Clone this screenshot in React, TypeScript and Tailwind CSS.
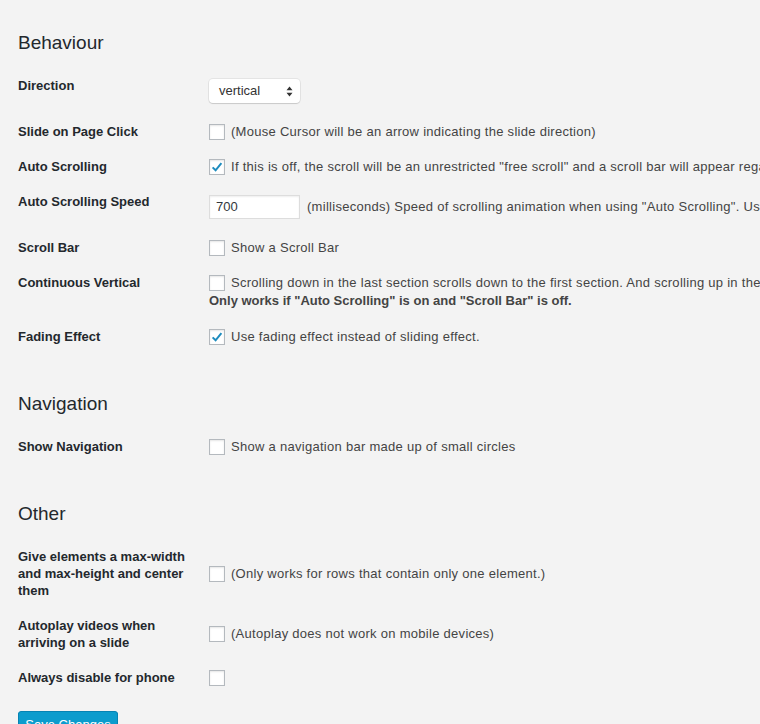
import React from 'react';

const font = { fontFamily: '"Liberation Sans", Arial, sans-serif' };

const Checkbox: React.FC<{ checked?: boolean }> = ({ checked }) => (
  <span className="inline-flex h-4 w-4 shrink-0 items-center justify-center border border-[#b4b9be] bg-white shadow-[inset_0_1px_2px_rgba(0,0,0,0.1)]">
    {checked && (
      <svg width="14" height="14" viewBox="0 0 14 14">
        <path d="M2.6 7.4 L5.6 10.3 L11.4 3.2" fill="none" stroke="#1e8cbe" strokeWidth="2" />
      </svg>
    )}
  </span>
);

const Row: React.FC<{ label: React.ReactNode; children: React.ReactNode; center?: boolean }> = ({
  label,
  children,
  center,
}) => (
  <div className={`flex py-[9px] ${center ? 'items-center' : 'items-start'}`}>
    <div className="w-[191px] shrink-0 pr-[10px] text-[13px] leading-[17px] font-bold text-[#23282d]">
      {label}
    </div>
    <div className="flex-1 whitespace-nowrap text-[13px] leading-[18px] tracking-[0.28px] text-[#444]">
      {children}
    </div>
  </div>
);

const CheckLine: React.FC<{ checked?: boolean; text?: string }> = ({ checked, text }) => (
  <div className="flex h-[17px] items-center gap-[6px]">
    <Checkbox checked={checked} />
    {text && <span>{text}</span>}
  </div>
);

const Heading: React.FC<{ children: React.ReactNode }> = ({ children }) => (
  <h2 className="mb-3 text-[19px] leading-[27px] font-normal text-[#23282d]">{children}</h2>
);

export default function App() {
  return (
    <div style={font} className="h-[724px] w-[760px] overflow-hidden bg-[#f3f3f3] pl-[18px] pt-[29px]">
      <Heading>Behaviour</Heading>
      <Row label="Direction">
        <div className="my-[2px] flex h-6 w-[91px] items-center justify-between rounded-[4px] bg-white pl-[10px] pr-[7px] tracking-normal text-[#333] shadow-[0_0_0_1px_rgba(0,0,0,0.06),0_1px_1px_rgba(0,0,0,0.12)]">
          <span>vertical</span>
          <svg width="7" height="11" viewBox="0 0 7 11">
            <path d="M3.5 0.5 L6.5 4.3 L0.5 4.3 Z M3.5 10.5 L6.5 6.7 L0.5 6.7 Z" fill="#333" />
          </svg>
        </div>
      </Row>
      <Row label="Slide on Page Click">
        <CheckLine text="(Mouse Cursor will be an arrow indicating the slide direction)" />
      </Row>
      <Row label="Auto Scrolling">
        <CheckLine
          checked
          text={'If this is off, the scroll will be an unrestricted "free scroll" and a scroll bar will appear regardless of the "Scroll Bar" setting.'}
        />
      </Row>
      <Row label="Auto Scrolling Speed">
        <div className="my-[2px] flex items-center gap-[7px]">
          <div className="flex h-6 w-[91px] shrink-0 items-center border border-[#ddd] bg-white pl-[6px] tracking-normal text-[#32373c] shadow-[inset_0_1px_2px_rgba(0,0,0,0.07)]">
            700
          </div>
          <span>{'(milliseconds) Speed of scrolling animation when using "Auto Scrolling". Using a higher value will slow down the animation.'}</span>
        </div>
      </Row>
      <Row label="Scroll Bar">
        <CheckLine text="Show a Scroll Bar" />
      </Row>
      <Row label="Continuous Vertical">
        <div className="flex h-[18px] items-center gap-[6px]">
          <Checkbox />
          <span>
            Scrolling down in the last section scrolls down to the first section. And scrolling up in the first section scrolls up to the last section.
          </span>
        </div>
        <div className="font-bold tracking-normal">{'Only works if "Auto Scrolling" is on and "Scroll Bar" is off.'}</div>
      </Row>
      <Row label="Fading Effect">
        <CheckLine checked text="Use fading effect instead of sliding effect." />
      </Row>

      <div className="mt-9">
        <Heading>Navigation</Heading>
        <Row label="Show Navigation">
          <CheckLine text="Show a navigation bar made up of small circles" />
        </Row>
      </div>

      <div className="mt-9">
        <Heading>Other</Heading>
        <Row label="Give elements a max-width and max-height and center them" center>
          <CheckLine text="(Only works for rows that contain only one element.)" />
        </Row>
        <Row label="Autoplay videos when arriving on a slide" center>
          <CheckLine text="(Autoplay does not work on mobile devices)" />
        </Row>
        <Row label="Always disable for phone">
          <CheckLine />
        </Row>
      </div>

      <button className="mt-[16px] h-7 w-[100px] rounded-[3px] border border-[#0683b3] bg-[#0c9ccd] text-[13px] leading-[26px] text-white shadow-[0_1px_0_#0073aa]">
        Save Changes
      </button>
    </div>
  );
}
